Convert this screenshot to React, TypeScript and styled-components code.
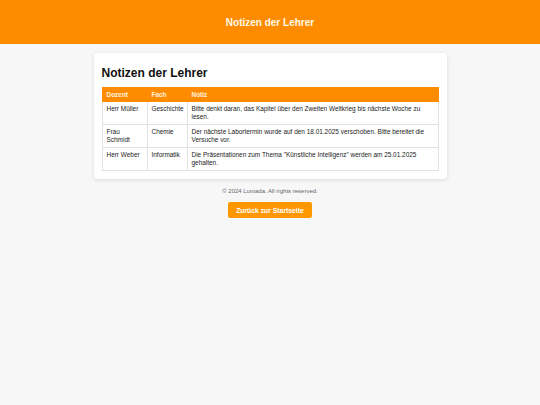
import React from "react";
import styled, { createGlobalStyle } from "styled-components";

const GlobalStyle = createGlobalStyle`
  html, body {
    margin: 0;
    padding: 0;
    background: #f7f7f7;
    font-family: "Liberation Sans", Arial, sans-serif;
    color: #222;
  }
`;

const Header = styled.header`
  height: 44px;
  background: #ff8c00;
  display: flex;
  align-items: center;
  justify-content: center;
  color: #fffbe8;
  font-size: 10px;
  font-weight: 700;
`;

const Main = styled.main`
  display: flex;
  flex-direction: column;
  align-items: center;
  padding-top: 9px;
`;

const Card = styled.section`
  width: 337px;
  background: #fff;
  border-radius: 4px;
  box-shadow: 0 1px 4px rgba(0, 0, 0, 0.12);
  padding: 8px;
`;

const Title = styled.h2`
  margin: 5px 0 7px;
  font-size: 12px;
  line-height: 14px;
  font-weight: 700;
  color: #111;
`;

const Table = styled.table`
  width: 100%;
  table-layout: fixed;
  border-collapse: collapse;
  font-size: 6.45px;
  line-height: 8px;
`;

const Th = styled.th<{ $w?: number }>`
  box-sizing: border-box;
  background: #ff8c00;
  color: #fff4e0;
  text-align: left;
  font-weight: 700;
  line-height: 7px;
  padding: 3px 4px;
  border: 1px solid #ff8c00;
  width: ${(p) => (p.$w ? `${p.$w}px` : "auto")};
`;

const Td = styled.td<{ $wide?: boolean }>`
  padding: ${(p) => (p.$wide ? "3px 1px 3px 4px" : "3px 4px")};
  border: 1px solid #e2e2e2;
  vertical-align: top;
  color: #222;
`;

const Footer = styled.footer`
  display: flex;
  flex-direction: column;
  align-items: center;
  margin-top: 9px;
  gap: 8px;
`;

const Copy = styled.p`
  margin: 0;
  font-size: 6px;
  color: #666;
`;

const BackButton = styled.a`
  display: inline-flex;
  align-items: center;
  justify-content: center;
  width: 84px;
  height: 16px;
  background: #ff9800;
  color: #fff;
  font-size: 6.8px;
  font-weight: 700;
  border-radius: 2px;
  text-decoration: none;
`;

const notes = [
  {
    teacher: "Herr Müller",
    subject: "Geschichte",
    note: "Bitte denkt daran, das Kapitel über den Zweiten Weltkrieg bis nächste Woche zu lesen.",
  },
  {
    teacher: "Frau Schmidt",
    subject: "Chemie",
    note: "Der nächste Labortermin wurde auf den 18.01.2025 verschoben. Bitte bereitet die Versuche vor.",
  },
  {
    teacher: "Herr Weber",
    subject: "Informatik",
    note: 'Die Präsentationen zum Thema "Künstliche Intelligenz" werden am 25.01.2025 gehalten.',
  },
];

export default function App() {
  return (
    <>
      <GlobalStyle />
      <Header>Notizen der Lehrer</Header>
      <Main>
        <Card>
          <Title>Notizen der Lehrer</Title>
          <Table>
            <thead>
              <tr>
                <Th $w={45}>Dozent</Th>
                <Th $w={40}>Fach</Th>
                <Th>Notiz</Th>
              </tr>
            </thead>
            <tbody>
              {notes.map((n) => (
                <tr key={n.teacher}>
                  <Td>{n.teacher}</Td>
                  <Td>{n.subject}</Td>
                  <Td $wide>{n.note}</Td>
                </tr>
              ))}
            </tbody>
          </Table>
        </Card>
        <Footer>
          <Copy>© 2024 Lumada. All rights reserved.</Copy>
          <BackButton href="#">Zurück zur Startseite</BackButton>
        </Footer>
      </Main>
    </>
  );
}
